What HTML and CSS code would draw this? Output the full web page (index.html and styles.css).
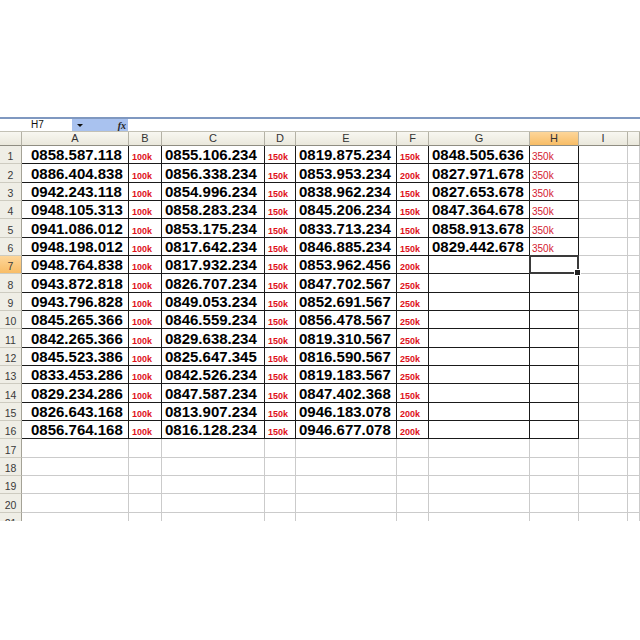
FILE: index.html
```html
<!DOCTYPE html>
<html lang="vi">
<head>
<meta charset="utf-8">
<title>Sim số đẹp</title>
<link rel="stylesheet" href="styles.css">
</head>
<body>
<div class="page">
  <div class="sheet">
    <div class="fbar">
      <div class="namebox">H7</div>
      <div class="fbtn"><span class="arrow"></span><span class="fx">fx</span></div>
      <div class="input"></div>
    </div>
    <div class="cols">
      <div></div><div>A</div><div>B</div><div>C</div><div>D</div><div>E</div><div>F</div><div>G</div><div class="sel">H</div><div>I</div><div></div>
    </div>
    <div class="row b"><div class="rh">1</div><div class="n a">0858.587.118</div><div class="p">100k</div><div class="n">0855.106.234</div><div class="p">150k</div><div class="n">0819.875.234</div><div class="p">150k</div><div class="n">0848.505.636</div><div class="q">350k</div><div></div><div></div></div>
    <div class="row b"><div class="rh">2</div><div class="n a">0886.404.838</div><div class="p">100k</div><div class="n">0856.338.234</div><div class="p">150k</div><div class="n">0853.953.234</div><div class="p">200k</div><div class="n">0827.971.678</div><div class="q">350k</div><div></div><div></div></div>
    <div class="row b"><div class="rh">3</div><div class="n a">0942.243.118</div><div class="p">100k</div><div class="n">0854.996.234</div><div class="p">150k</div><div class="n">0838.962.234</div><div class="p">150k</div><div class="n">0827.653.678</div><div class="q">350k</div><div></div><div></div></div>
    <div class="row b"><div class="rh">4</div><div class="n a">0948.105.313</div><div class="p">100k</div><div class="n">0858.283.234</div><div class="p">150k</div><div class="n">0845.206.234</div><div class="p">150k</div><div class="n">0847.364.678</div><div class="q">350k</div><div></div><div></div></div>
    <div class="row b"><div class="rh">5</div><div class="n a">0941.086.012</div><div class="p">100k</div><div class="n">0853.175.234</div><div class="p">150k</div><div class="n">0833.713.234</div><div class="p">150k</div><div class="n">0858.913.678</div><div class="q">350k</div><div></div><div></div></div>
    <div class="row b"><div class="rh">6</div><div class="n a">0948.198.012</div><div class="p">100k</div><div class="n">0817.642.234</div><div class="p">150k</div><div class="n">0846.885.234</div><div class="p">150k</div><div class="n">0829.442.678</div><div class="q">350k</div><div></div><div></div></div>
    <div class="row b"><div class="rh sel">7</div><div class="n a">0948.764.838</div><div class="p">100k</div><div class="n">0817.932.234</div><div class="p">150k</div><div class="n">0853.962.456</div><div class="p">200k</div><div></div><div class="cur"></div><div></div><div></div></div>
    <div class="row b"><div class="rh">8</div><div class="n a">0943.872.818</div><div class="p">100k</div><div class="n">0826.707.234</div><div class="p">150k</div><div class="n">0847.702.567</div><div class="p">250k</div><div></div><div></div><div></div><div></div></div>
    <div class="row b"><div class="rh">9</div><div class="n a">0943.796.828</div><div class="p">100k</div><div class="n">0849.053.234</div><div class="p">150k</div><div class="n">0852.691.567</div><div class="p">250k</div><div></div><div></div><div></div><div></div></div>
    <div class="row b"><div class="rh">10</div><div class="n a">0845.265.366</div><div class="p">100k</div><div class="n">0846.559.234</div><div class="p">150k</div><div class="n">0856.478.567</div><div class="p">250k</div><div></div><div></div><div></div><div></div></div>
    <div class="row b"><div class="rh">11</div><div class="n a">0842.265.366</div><div class="p">100k</div><div class="n">0829.638.234</div><div class="p">150k</div><div class="n">0819.310.567</div><div class="p">250k</div><div></div><div></div><div></div><div></div></div>
    <div class="row b"><div class="rh">12</div><div class="n a">0845.523.386</div><div class="p">100k</div><div class="n">0825.647.345</div><div class="p">150k</div><div class="n">0816.590.567</div><div class="p">250k</div><div></div><div></div><div></div><div></div></div>
    <div class="row b"><div class="rh">13</div><div class="n a">0833.453.286</div><div class="p">100k</div><div class="n">0842.526.234</div><div class="p">150k</div><div class="n">0819.183.567</div><div class="p">250k</div><div></div><div></div><div></div><div></div></div>
    <div class="row b"><div class="rh">14</div><div class="n a">0829.234.286</div><div class="p">100k</div><div class="n">0847.587.234</div><div class="p">150k</div><div class="n">0847.402.368</div><div class="p">150k</div><div></div><div></div><div></div><div></div></div>
    <div class="row b"><div class="rh">15</div><div class="n a">0826.643.168</div><div class="p">100k</div><div class="n">0813.907.234</div><div class="p">150k</div><div class="n">0946.183.078</div><div class="p">200k</div><div></div><div></div><div></div><div></div></div>
    <div class="row b"><div class="rh">16</div><div class="n a">0856.764.168</div><div class="p">100k</div><div class="n">0816.128.234</div><div class="p">150k</div><div class="n">0946.677.078</div><div class="p">200k</div><div></div><div></div><div></div><div></div></div>
    <div class="row"><div class="rh">17</div><div></div><div></div><div></div><div></div><div></div><div></div><div></div><div></div><div></div><div></div></div>
    <div class="row"><div class="rh">18</div><div></div><div></div><div></div><div></div><div></div><div></div><div></div><div></div><div></div><div></div></div>
    <div class="row"><div class="rh">19</div><div></div><div></div><div></div><div></div><div></div><div></div><div></div><div></div><div></div><div></div></div>
    <div class="row"><div class="rh">20</div><div></div><div></div><div></div><div></div><div></div><div></div><div></div><div></div><div></div><div></div></div>
    <div class="row"><div class="rh">21</div><div></div><div></div><div></div><div></div><div></div><div></div><div></div><div></div><div></div><div></div></div>
  </div>
</div>
</body>
</html>
```
FILE: styles.css
```css
* { box-sizing: border-box; margin: 0; padding: 0; }
body { margin: 0; background: #fff; font-family: "Liberation Sans", Arial, sans-serif; }
.page { padding-top: 117px; }
.sheet { height: 404px; overflow: hidden; }

.fbar { display: flex; height: 14px; border-top: 2px solid #7f98c0; }
.namebox { width: 72px; background: #fff; font-size: 10px; line-height: 11px; color: #111; padding-left: 31px; }
.fbtn { width: 56px; background: #a9c2ef; display: flex; align-items: center; justify-content: space-between; padding: 0 2px 0 5px; }
.arrow { width: 0; height: 0; border-left: 3px solid transparent; border-right: 3px solid transparent; border-top: 3px solid #111; }
.fx { font: italic bold 10px "Liberation Serif", serif; color: #222; }
.input { flex: 1; background: #fff; }

.cols, .row { display: grid; grid-template-columns: 22px 107px 33px 103px 31px 101px 32px 101px 49px 49px 1fr; }
.cols { height: 15px; border-top: 1px solid #c3c1b5; }
.cols > div { background: linear-gradient(#f8f7f1, #eae8dc); border-right: 1px solid #b4b2a6; border-bottom: 1px solid #8f8d82; font-size: 11px; line-height: 13px; color: #333; text-align: center; }
.cols > .sel { background: linear-gradient(#fdd69a, #f8bd66); }

.row { height: 18.33px; }
.row > div { border-right: 1px solid #cbcbcb; border-bottom: 1px solid #cbcbcb; display: flex; align-items: flex-end; padding-bottom: 1px; white-space: nowrap; }
.row > .rh { background: #efeee6; border-right-color: #a4a296; border-bottom-color: #cdcbc0; justify-content: center; font-size: 10.5px; line-height: 12px; color: #3a3a3a; }
.row > .rh.sel { background: linear-gradient(#fdd69a, #f8bd66); }
.row.b > div:nth-child(n+2):nth-child(-n+9) { border-color: #1a1a1a; }

.n { font-weight: bold; font-size: 15px; line-height: 15px; color: #000; padding-left: 3px; }
.row > .a { padding-left: 9px; }
.p { font-weight: bold; font-size: 9px; line-height: 10px; color: #e0101a; padding-left: 3px; }
.q { font-size: 10px; line-height: 11px; color: #d42030; padding-left: 2px; }

.cur { position: relative; }
.cur::before { content: ""; position: absolute; left: -1px; top: -1px; right: -1px; bottom: -1px; border: 2px solid #3a3a3a; }
.cur::after { content: ""; position: absolute; right: -3px; bottom: -3px; width: 5px; height: 5px; background: #222; border: 1px solid #fff; }
```
